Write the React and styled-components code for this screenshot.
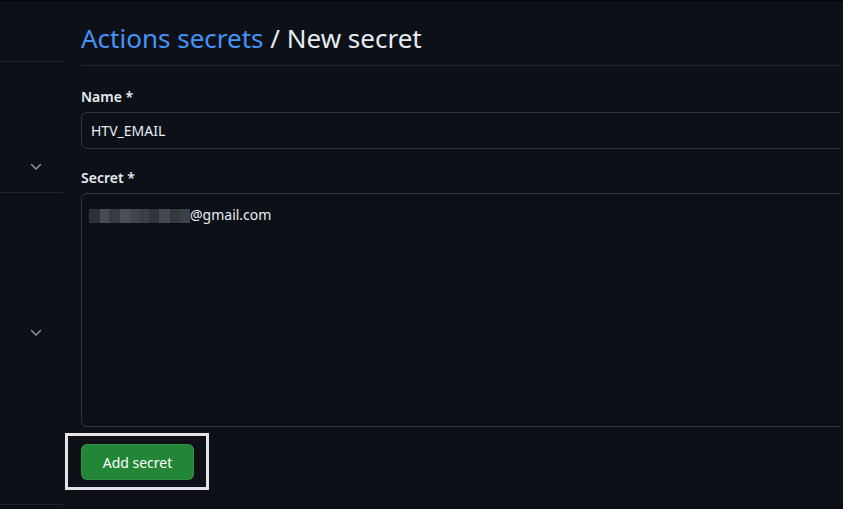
import React from "react";
import styled, { createGlobalStyle } from "styled-components";

const GlobalStyle = createGlobalStyle`
  html, body {
    margin: 0;
    padding: 0;
    background: #0d1117;
    overflow: hidden;
  }
  body {
    font-family: "Segoe UI", "Noto Sans", "Open Sans", sans-serif;
    color: #e6edf3;
  }
`;

const Page = styled.div`
  display: flex;
  height: 509px;
  border-top: 1px solid #010409;
  box-sizing: border-box;
`;

const Sidebar = styled.aside`
  width: 63px;
  flex-shrink: 0;
  display: flex;
  flex-direction: column;
`;

const SideBlock = styled.div`
  height: ${(p) => p.h}px;
  padding-top: ${(p) => p.chevronAt || 0}px;
  box-sizing: border-box;
  border-bottom: 1px solid #21262d;
  display: flex;
  justify-content: flex-end;
  align-items: flex-start;
  padding-right: 21px;
`;

const Chevron = () => (
  <svg width="12" height="8" viewBox="0 0 12 8">
    <polyline
      points="1.5,1.5 6,6 10.5,1.5"
      fill="none"
      stroke="#8b949e"
      strokeWidth="1.5"
      strokeLinecap="round"
      strokeLinejoin="round"
    />
  </svg>
);

const Main = styled.main`
  margin-left: 18px;
  width: 759px;
`;

const Subhead = styled.div`
  height: 65px;
  box-sizing: border-box;
  padding-top: 20px;
  border-bottom: 1px solid #21262d;
`;

const Heading = styled.h2`
  margin: 0;
  font-size: 26px;
  font-weight: 400;
  line-height: 34px;
  color: #e6edf3;
  white-space: nowrap;
`;

const Crumb = styled.a`
  color: #4493f8;
  text-decoration: none;
`;

const Field = styled.div`
  margin-top: ${(p) => p.top}px;
  overflow: hidden;
`;

const Label = styled.label`
  display: block;
  font-size: 14px;
  font-weight: 600;
  line-height: 20px;
  color: #e6edf3;
  margin-bottom: 5px;
`;

const TextBox = styled.div`
  width: calc(100% + 20px);
  height: ${(p) => p.h}px;
  box-sizing: border-box;
  border: 1px solid #30363d;
  border-radius: 6px;
  background: #0d1117;
  padding: ${(p) => p.pad};
  font-size: 14px;
  line-height: 20px;
  color: #e6edf3;
  display: flex;
  align-items: flex-start;
`;

const Redacted = styled.span`
  display: inline-flex;
  height: 14px;
  margin-top: 4px;
`;

const Pixel = styled.span`
  width: ${(p) => p.w}px;
  height: 14px;
  background: ${(p) => p.c};
`;

const Highlight = styled.div`
  margin-top: 6px;
  margin-left: -16px;
  width: 144px;
  height: 57px;
  box-sizing: border-box;
  border: 3px solid #e4e4e4;
  padding: 8px 0 0 13px;
`;

const Button = styled.button`
  width: 113px;
  height: 36px;
  border: 1px solid rgba(240, 246, 252, 0.1);
  border-radius: 6px;
  background: #238636;
  color: #ffffff;
  font-family: inherit;
  font-size: 14px;
  font-weight: 400;
  cursor: pointer;
`;

const pixels = [
  ["#2c3038", 11],
  ["#474b52", 9],
  ["#363a42", 11],
  ["#4a4e55", 10],
  ["#41454b", 10],
  ["#3a3e45", 9],
  ["#30343b", 10],
  ["#45494f", 11],
  ["#33373e", 10],
  ["#3c4047", 10],
];

export default function App() {
  return (
    <>
      <GlobalStyle />
      <Page>
        <Sidebar>
          <SideBlock h={61} />
          <SideBlock h={131} chevronAt={101}>
            <Chevron />
          </SideBlock>
          <SideBlock h={312} chevronAt={136}>
            <Chevron />
          </SideBlock>
        </Sidebar>
        <Main>
          <Subhead>
            <Heading>
              <Crumb href="#">Actions secrets</Crumb> / New secret
            </Heading>
          </Subhead>
          <Field top={21}>
            <Label>Name *</Label>
            <TextBox h={37} pad="8px 9px">HTV_EMAIL</TextBox>
          </Field>
          <Field top={19}>
            <Label>Secret *</Label>
            <TextBox h={234} pad="11px 7px">
              <Redacted>
                {pixels.map(([c, w], i) => (
                  <Pixel key={i} c={c} w={w} />
                ))}
              </Redacted>
              @gmail.com
            </TextBox>
          </Field>
          <Highlight>
            <Button>Add secret</Button>
          </Highlight>
        </Main>
      </Page>
    </>
  );
}
